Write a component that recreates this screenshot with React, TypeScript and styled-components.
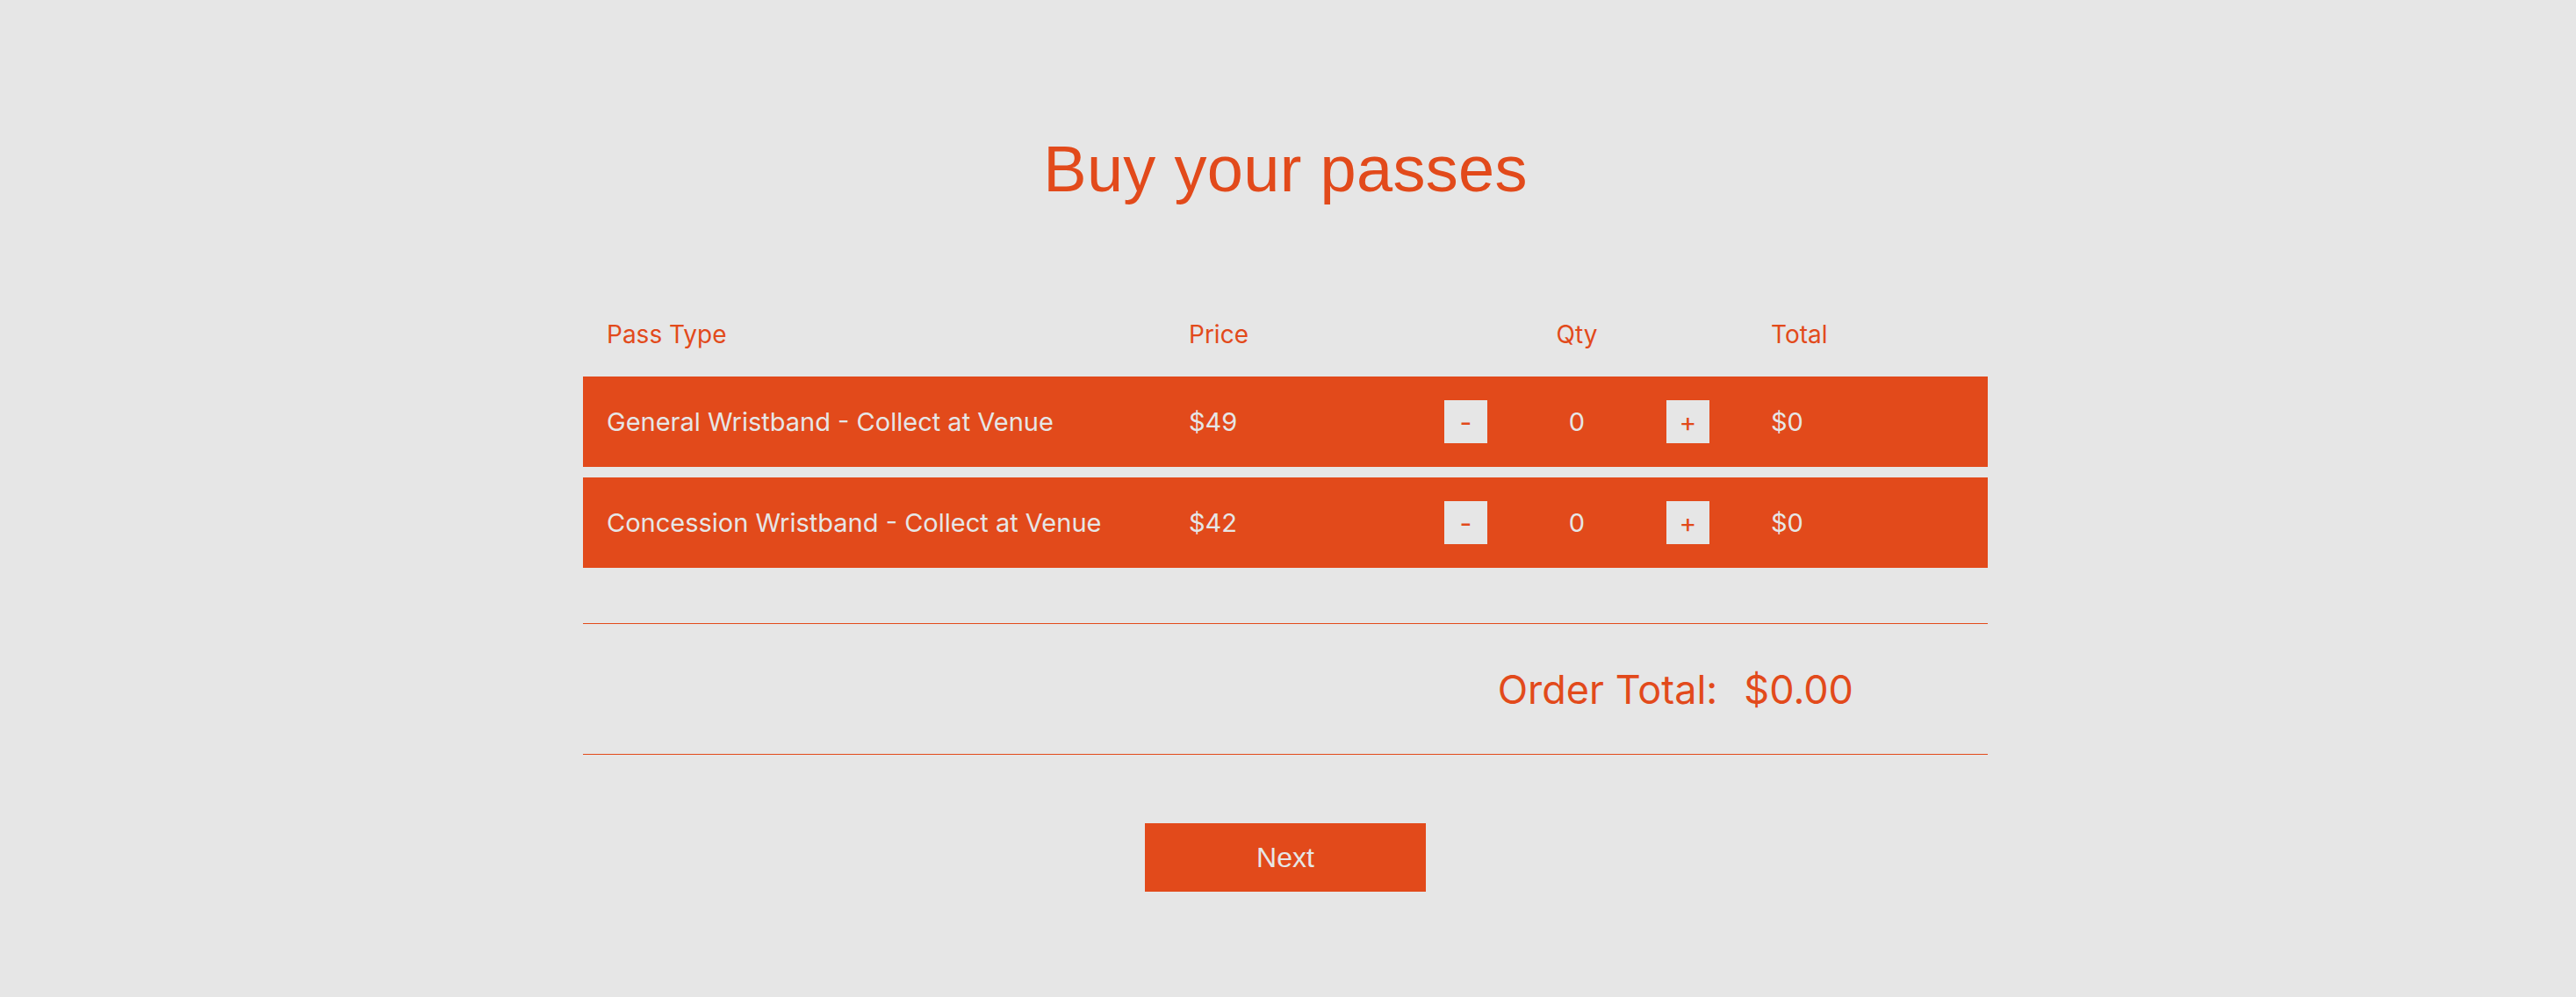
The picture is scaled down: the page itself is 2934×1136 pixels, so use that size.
import React, { useState } from 'react';
import styled, { createGlobalStyle } from 'styled-components';

const ORANGE = '#e24a1b';
const GREY = '#e6e6e6';

const GlobalStyle = createGlobalStyle`
  html, body {
    margin: 0;
    padding: 0;
    background: ${GREY};
  }
  body {
    font-family: Inter, "Liberation Sans", Arial, sans-serif;
    color: ${ORANGE};
  }
`;

const Page = styled.main`
  display: flex;
  flex-direction: column;
  align-items: center;
  padding: 0 6px 0 0;
  min-height: 1136px;
  box-sizing: border-box;
`;

const Title = styled.h1`
  margin: 156px 0 0;
  font-family: "Liberation Sans", Arial, sans-serif;
  font-size: 74px;
  line-height: 74px;
  font-weight: 400;
  letter-spacing: 0.3px;
  color: ${ORANGE};
`;

const Table = styled.section`
  width: 1600px;
  margin-top: 120px;
  display: flex;
  flex-direction: column;
  gap: 12px;
`;

const Grid = styled.div`
  display: grid;
  grid-template-columns: 663px 291px 372px 1fr;
  align-items: center;
`;

const HeadRow = styled(Grid)`
  height: 67px;
  box-sizing: border-box;
  padding-top: 13px;
  align-items: start;
  font-size: 28px;
  line-height: 36px;
  color: ${ORANGE};
`;

const Row = styled(Grid)`
  height: 103px;
  background: ${ORANGE};
  color: ${GREY};
  font-size: 29px;
  line-height: 36px;
`;

const Cell = styled.div`
  padding-left: 27px;
  white-space: nowrap;
`;

const QtyHead = styled.div`
  padding-left: 76px;
  width: 280px;
  text-align: center;
  box-sizing: border-box;
`;

const QtyCell = styled.div`
  display: flex;
  align-items: center;
  padding-left: 27px;
`;

const StepButton = styled.button`
  width: 49px;
  height: 49px;
  padding: 0;
  border: none;
  background: ${GREY};
  color: ${ORANGE};
  font-family: Inter, "Liberation Sans", Arial, sans-serif;
  font-size: 30px;
  line-height: 46px;
  cursor: pointer;
`;

const Count = styled.span`
  width: 204px;
  text-align: center;
`;

const Rule = styled.hr<{ $gap?: number }>`
  width: 1600px;
  margin: ${p => p.$gap ?? 0}px 0 0;
  border: none;
  border-top: 1px solid ${ORANGE};
`;

const TotalBar = styled.div`
  width: 1600px;
  height: 148px;
  display: flex;
  justify-content: flex-end;
  align-items: center;
  gap: 30px;
  padding-right: 153px;
  box-sizing: border-box;
  font-size: 45px;
  color: ${ORANGE};
`;

const NextButton = styled.button`
  margin-top: 78px;
  width: 320px;
  height: 78px;
  border: none;
  background: ${ORANGE};
  color: ${GREY};
  font-family: "Liberation Sans", Arial, sans-serif;
  font-size: 32px;
  cursor: pointer;
`;

const passes = [
  { name: 'General Wristband - Collect at Venue', price: 49 },
  { name: 'Concession Wristband - Collect at Venue', price: 42 },
];

export default function App() {
  const [qty, setQty] = useState<number[]>(passes.map(() => 0));

  const change = (i: number, d: number) =>
    setQty(q => q.map((v, j) => (j === i ? Math.max(0, v + d) : v)));

  const total = passes.reduce((s, p, i) => s + p.price * qty[i], 0);

  return (
    <>
      <GlobalStyle />
      <Page>
        <Title>Buy your passes</Title>
        <Table>
          <HeadRow>
            <Cell>Pass Type</Cell>
            <Cell>Price</Cell>
            <QtyHead>Qty</QtyHead>
            <Cell>Total</Cell>
          </HeadRow>
          {passes.map((p, i) => (
            <Row key={p.name}>
              <Cell>{p.name}</Cell>
              <Cell>${p.price}</Cell>
              <QtyCell>
                <StepButton onClick={() => change(i, -1)}>-</StepButton>
                <Count>{qty[i]}</Count>
                <StepButton onClick={() => change(i, 1)}>+</StepButton>
              </QtyCell>
              <Cell>${p.price * qty[i]}</Cell>
            </Row>
          ))}
        </Table>
        <Rule $gap={63} />
        <TotalBar>
          <span>Order Total:</span>
          <span>${total.toFixed(2)}</span>
        </TotalBar>
        <Rule />
        <NextButton>Next</NextButton>
      </Page>
    </>
  );
}
